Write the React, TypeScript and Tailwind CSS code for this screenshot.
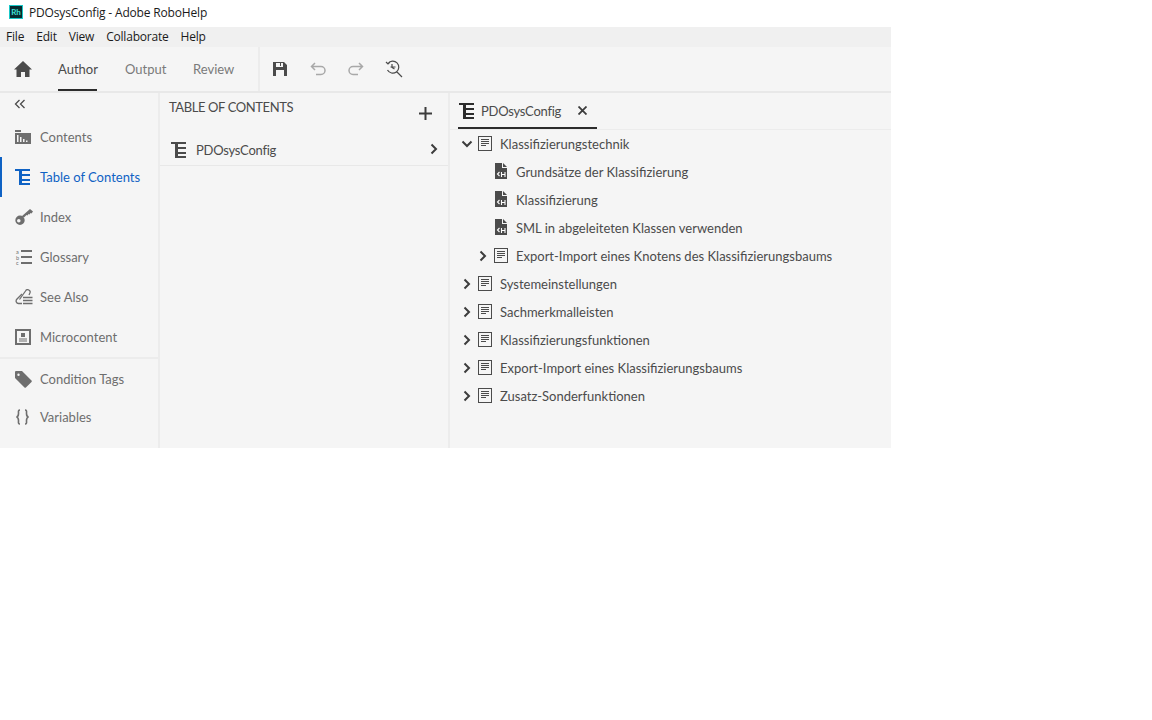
import type { ReactNode } from 'react';

const font = "[font-family:Lato,'Liberation_Sans',sans-serif]";

// Small icon set drawn to follow the RoboHelp glyphs
function TocIcon({ className = '' }: { className?: string }) {
  return (
    <svg width="16" height="16" viewBox="0 0 16 16" className={className} fill="currentColor">
      <path d="M0 0h15v2H0zM4 2h3v14H4zM7 5h8v2H7zM7 10h8v2H7zM7 14h8v2H7z" />
    </svg>
  );
}

function BookIcon() {
  return (
    <svg width="15" height="15" viewBox="0 0 15 15" fill="none" stroke="#4b4b4b" strokeWidth="1" className="mb-[2px]">
      <rect x="0.500" y="0.500" width="13" height="14" />
      <path d="M3 3.500h8M3 5.500h8M3 7.500h8M3 9.500h5" />
    </svg>
  );
}

function TopicIcon() {
  return (
    <svg width="12" height="16" viewBox="0 0 12 16" className="mb-[2px] ml-px">
      <path d="M0 0h7v5h5v11H0z" fill="#4b4b4b" />
      <path d="M8 0l4 4H8z" fill="#4b4b4b" />
      <path d="M4.500 9l-2 2 2 2" fill="none" stroke="#fff" strokeWidth="1.100" />
      <path d="M6.500 9v5M10 9v5M6.500 11.500H10" fill="none" stroke="#fff" strokeWidth="1.100" />
    </svg>
  );
}

function Chevron({ down = false }: { down?: boolean }) {
  return (
    <svg width="12" height="12" viewBox="0 0 12 12" fill="none" stroke="#3c3c3c" strokeWidth="2" className="mb-px">
      {down ? <path d="M1.500 3.500L6 8l4.500-4.500" /> : <path d="M3.500 1.500L8 6l-4.500 4.500" />}
    </svg>
  );
}

const sideIcons: Record<string, ReactNode> = {
  Contents: (
    <svg width="16" height="14" viewBox="0 0 16 14" fill="#6e6e6e">
      <path d="M0 0h6v2H0zM0 3h16v11H0z" />
      <path d="M2 5h1.500v7H2zM5 7h1.500v5H5zM8 9h1.500v3H8zM11 10.500h1.500V12H11z" fill="#f5f5f5" />
    </svg>
  ),
  'Table of Contents': <TocIcon className="text-[#0f62c4]" />,
  Index: (
    <svg width="18" height="16" viewBox="0 0 18 16" fill="#6e6e6e">
      <path d="M5 6.500a4.700 4.700 0 1 0 0 9.400 4.700 4.700 0 0 0 0-9.400zM3.800 10a1.800 1.800 0 1 1 0 3.600 1.800 1.800 0 0 1 0-3.600z" fillRule="evenodd" />
      <path d="M6.500 7.500L15 0l3 2.500-1.500 2-1-.5-1 1.500-1-.5-1 1.500-1-.5-2.500 2.500z" />
    </svg>
  ),
  Glossary: (
    <svg width="18" height="15" viewBox="0 0 18 15" fill="#6e6e6e">
      <path d="M6 0h11v2H6zM6 6h11v2H6zM6 12h11v2H6z" />
      <text x="1" y="4" fontSize="5.500" fontFamily="Lato">a</text>
      <text x="1" y="9.500" fontSize="5.500" fontFamily="Lato">b</text>
      <text x="1" y="15" fontSize="5.500" fontFamily="Lato">c</text>
    </svg>
  ),
  'See Also': (
    <svg width="18" height="16" viewBox="0 0 18 16" fill="none" stroke="#6e6e6e" strokeWidth="1.300">
      <path d="M7 14.500H3.500A2.500 2.500 0 0 1 1.800 10.300L7 5" />
      <path d="M4.500 10.500L10.500 2a2.300 2.300 0 0 1 4.300 2.300L14 6" />
      <path d="M8 8.500h9.500M8 11.500h9.500M8 14.500h9.500" />
    </svg>
  ),
  Microcontent: (
    <svg width="16" height="16" viewBox="0 0 16 16" fill="#6e6e6e">
      <path fillRule="evenodd" d="M0 0h16v16H0zM2 2v12h12V2z" />
      <path d="M6 4h4v4H6zM4 9.500h8v1H4zM4 11.500h8v1H4z" />
    </svg>
  ),
  'Condition Tags': (
    <svg width="17" height="17" viewBox="0 0 17 17" fill="#6e6e6e">
      <path fillRule="evenodd" d="M0 1a1 1 0 0 1 1-1h6l9.500 9.500a1 1 0 0 1 0 1.400l-5.600 5.600a1 1 0 0 1-1.400 0L0 7zM3.500 2.500a1.200 1.200 0 1 0 0 2.400 1.200 1.200 0 0 0 0-2.400z" />
    </svg>
  ),
  Variables: (
    <svg width="15" height="16" viewBox="0 0 15 16" fill="none" stroke="#6e6e6e" strokeWidth="1.600">
      <path d="M5 1C3 1 3.500 2.500 3.500 4.500S3.500 7.500 1.500 8c2 .5 2 1.500 2 3.500S3 15 5 15" />
      <path d="M10 1c2 0 1.500 1.500 1.500 3.500s0 3 2 3.500c-2 .5-2 1.500-2 3.500s.5 3.500-1.500 3.500" />
    </svg>
  ),
};

function SideItem({ label, active = false, h = 'h-10' }: { label: string; active?: boolean; h?: string }) {
  return (
    <div className={`relative flex items-center ${h} pl-[15px] ${active ? 'text-[#0f62c4]' : 'text-[#6e6e6e]'}`}>
      {active && <div className="absolute left-0 top-0 h-10 w-[2px] bg-[#0f62c4]" />}
      <div className="flex w-[25px] shrink-0 items-center">{sideIcons[label]}</div>
      <span className="pt-[2px] text-[13px]">{label}</span>
    </div>
  );
}

function TreeRow({ label, kind, depth = 0, open = false }: { label: string; kind: 'book' | 'topic'; depth?: number; open?: boolean }) {
  return (
    <div className={`flex h-7 items-center ${depth ? 'pl-[27px]' : 'pl-[11px]'}`}>
      <div className="flex w-[17px] shrink-0 items-center">
        {kind === 'book' && <Chevron down={open} />}
      </div>
      <div className="flex w-[22px] shrink-0 items-center">
        {kind === 'book' ? <BookIcon /> : <TopicIcon />}
      </div>
      <span className="whitespace-nowrap pt-[2px] text-[13px] text-[#4b4b4b]">{label}</span>
    </div>
  );
}

export default function App() {
  return (
    <div className={`min-h-[720px] bg-white ${font}`}>
      <div className="flex h-[27px] items-center gap-[6px] pl-[9px] pb-[2px]">
        <div className="mb-[2px] flex h-[14px] w-[14px] items-center justify-center border border-[#19c8c8] bg-[#062a2f] text-[8px] font-bold leading-none text-[#3fe0d8]">Rh</div>
        <span className="text-[12px] tracking-[-0.17px] text-[#1a1a1a] [font-family:'Open_Sans',sans-serif]">PDOsysConfig - Adobe RoboHelp</span>
      </div>

      <div className="w-[891px]">
        <div className="flex h-5 items-center gap-[12px] bg-[#f0f0f0] pl-[6px] text-[12px] tracking-[-0.2px] text-[#1a1a1a] [font-family:'Open_Sans',sans-serif]">
          <span>File</span>
          <span>Edit</span>
          <span>View</span>
          <span>Collaborate</span>
          <span>Help</span>
        </div>

        <div className="flex h-[46px] border-b-2 border-[#e8e8e8] bg-[#f5f5f5]">
          <div className="flex w-[58px] items-center pl-[14px]">
            <svg width="18" height="16" viewBox="0 0 18 16" fill="#4b4b4b">
              <path d="M9 0L0 8.500h2.500V16H7v-5h4v5h4.500V8.500H18z" />
            </svg>
          </div>
          <div className="relative flex w-[67px] items-center pt-[2px] text-[13px] text-[#4b4b4b]">
            Author
            <div className="absolute bottom-0 left-0 h-[2px] w-[39px] bg-[#2c2c2c]" />
          </div>
          <div className="flex w-[68px] items-center pt-[2px] text-[13px] text-[#7a7a7a]">Output</div>
          <div className="flex w-[67px] items-center border-r-2 border-[#ececec] pt-[2px] text-[13px] text-[#7a7a7a]">Review</div>
          <div className="flex items-center gap-[22px] pl-[12px]">
            <svg width="16" height="16" viewBox="0 0 16 16" fill="#4b4b4b">
              <path fillRule="evenodd" d="M1 1h11l3 3v11H1zM4 2v4h7V2H9v3H8V2zM4 9v6h8V9z" />
            </svg>
            <svg width="16" height="14" viewBox="0 0 16 14" fill="none" stroke="#a8a8a8" strokeWidth="1.500">
              <path d="M5 1L1.500 4.500 5 8M2 4.500h9a3.500 3.500 0 0 1 0 8H6" />
            </svg>
            <svg width="16" height="14" viewBox="0 0 16 14" fill="none" stroke="#a8a8a8" strokeWidth="1.500">
              <path d="M11 1l3.500 3.500L11 8M14 4.500H5a3.500 3.500 0 0 0 0 8h5" />
            </svg>
            <svg width="18" height="18" viewBox="0 0 18 18" fill="none" stroke="#4b4b4b" strokeWidth="1.200" className="-ml-px">
              <path d="M3 3.500A6 6 0 1 1 2.500 10M1 2l2 2 2-2M12 12l5 5" />
              <path d="M7 4v3.500l2.500 1.500M5.500 7h5" />
            </svg>
          </div>
        </div>

        <div className="flex h-[355px] bg-[#f5f5f5]">
          <div className="w-[160px] shrink-0 border-r-2 border-[#ececec]">
            <div className="flex h-[24px] items-center pl-[14px] pb-[2px]">
              <svg width="12" height="10" viewBox="0 0 12 10" fill="none" stroke="#4b4b4b" strokeWidth="1.300">
                <path d="M5.500 1L1.500 5l4 4M10.500 1l-4 4 4 4" />
              </svg>
            </div>
            <SideItem label="Contents" />
            <SideItem label="Table of Contents" active />
            <SideItem label="Index" />
            <SideItem label="Glossary" />
            <SideItem label="See Also" />
            <div className="border-b-2 border-[#ececec]">
              <SideItem label="Microcontent" />
            </div>
            <SideItem label="Condition Tags" />
            <SideItem label="Variables" h="h-[36px]" />
          </div>

          <div className="w-[290px] shrink-0 border-r-2 border-[#ececec]">
            <div className="flex h-[38px] items-start justify-between pr-[16px] pl-[9px] pt-[5px]">
              <span className="text-[13px] tracking-[-0.4px] text-[#4b4b4b]">TABLE OF CONTENTS</span>
              <svg width="13" height="13" viewBox="0 0 13 13" stroke="#3c3c3c" strokeWidth="2" className="mt-[9px]">
                <path d="M6.500 0v13M0 6.500h13" />
              </svg>
            </div>
            <div className="flex h-[35px] items-center border-b border-[#e8e8e8] pr-[8px] pl-[11px] pt-[3px] text-[#4b4b4b]">
              <TocIcon />
              <span className="ml-[9px] flex-1 pt-[2px] text-[13px] tracking-[-0.25px]">PDOsysConfig</span>
              <Chevron />
            </div>
          </div>

          <div className="flex-1">
            <div className="h-[37px] border-b border-[#ececec] pl-[8px]">
              <div className="flex h-[36px] w-[139px] items-center border-b-2 border-[#2c2c2c] pl-[1px] pt-[1px] text-[#2c2c2c]">
                <TocIcon />
                <span className="ml-[6px] pt-[2px] text-[13px] tracking-[-0.25px] text-[#4b4b4b]">PDOsysConfig</span>
                <svg width="9" height="9" viewBox="0 0 9 9" stroke="#3c3c3c" strokeWidth="1.800" className="ml-[17px]">
                  <path d="M.5.500l8 8M8.500.500l-8 8" />
                </svg>
              </div>
            </div>
            <TreeRow label="Klassifizierungstechnik" kind="book" open />
            <TreeRow label="Grundsätze der Klassifizierung" kind="topic" depth={1} />
            <TreeRow label="Klassifizierung" kind="topic" depth={1} />
            <TreeRow label="SML in abgeleiteten Klassen verwenden" kind="topic" depth={1} />
            <TreeRow label="Export-Import eines Knotens des Klassifizierungsbaums" kind="book" depth={1} />
            <TreeRow label="Systemeinstellungen" kind="book" />
            <TreeRow label="Sachmerkmalleisten" kind="book" />
            <TreeRow label="Klassifizierungsfunktionen" kind="book" />
            <TreeRow label="Export-Import eines Klassifizierungsbaums" kind="book" />
            <TreeRow label="Zusatz-Sonderfunktionen" kind="book" />
          </div>
        </div>
      </div>
    </div>
  );
}
